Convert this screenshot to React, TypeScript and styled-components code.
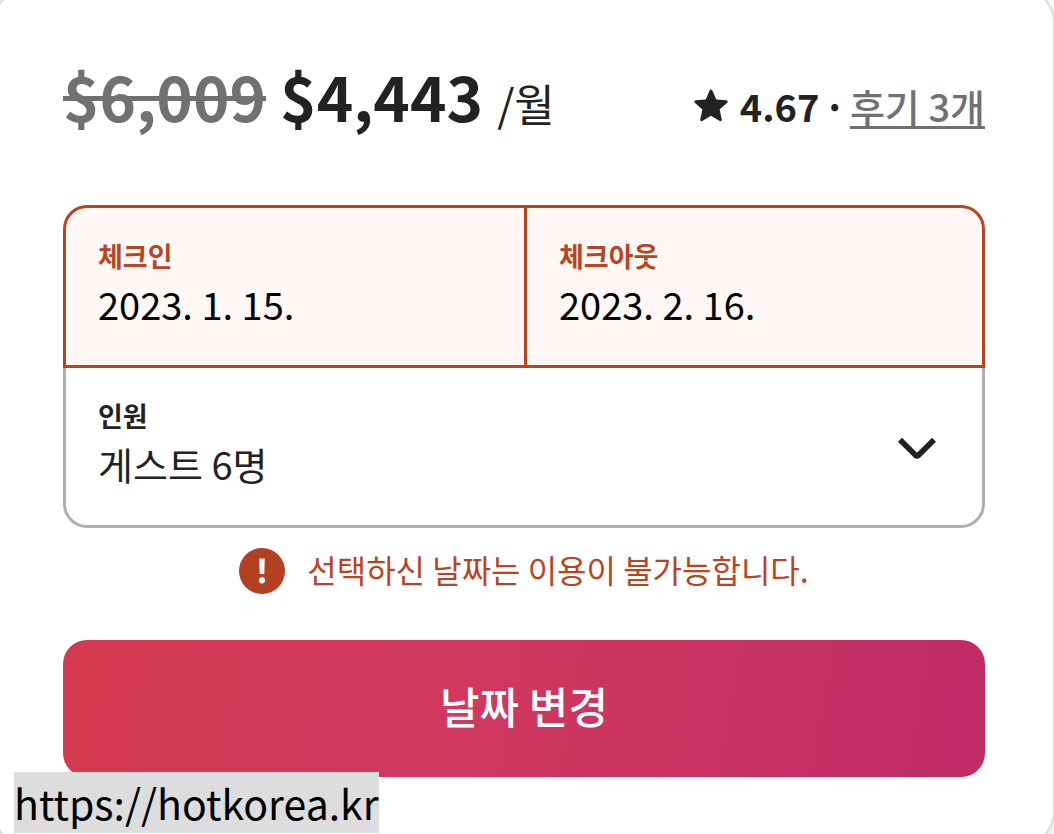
import React, { useState } from "react";
import styled, { createGlobalStyle } from "styled-components";

const sans = '"Noto Sans CJK KR", "Noto Sans", sans-serif';
const ink = "#222222";
const muted = "#717171";
const danger = "#b9441f";
const line = "#b0b0b0";

const GlobalStyle = createGlobalStyle`
  *, *::before, *::after { box-sizing: border-box; }
  body { margin: 0; background: #ffffff; color: ${ink}; font-family: ${sans}; }
  input, select, button { font-family: inherit; }
`;

const Page = styled.main`
  position: relative;
  height: 100vh;
  overflow: hidden;
`;

const Card = styled.section`
  margin: -13px -1px 0 -7px;
  padding: 68px;
  border: 2px solid #dddddd;
  border-radius: 36px;
  background: #ffffff;
  box-shadow: 0 6px 16px rgba(0, 0, 0, 0.12);
`;

const Header = styled.header`
  display: flex;
  align-items: baseline;
  justify-content: space-between;
  height: 88px;
  margin-bottom: 60px;
  white-space: nowrap;
`;

const Price = styled.div`
  display: flex;
  align-items: baseline;
  gap: 14px;
  font-size: 62px;
  line-height: 76px;
`;

const OldPrice = styled.del`
  color: ${muted};
  font-weight: 700;
  text-decoration-thickness: 5px;
`;

const NewPrice = styled.strong`
  font-weight: 700;
`;

const Unit = styled.span`
  font-size: 44px;
`;

const Rating = styled.div`
  display: flex;
  align-items: baseline;
  gap: 4px;
  font-size: 38px;
  line-height: 56px;
`;

const Score = styled.strong`
  padding-left: 8px;
  font-weight: 700;
`;

const Dot = styled.span`
  font-weight: 700;
`;

const Reviews = styled.a`
  color: ${muted};
  font-weight: 500;
  text-decoration: underline;
  text-decoration-thickness: 3px;
  text-underline-offset: 4px;
`;

const Fields = styled.form`
  display: flex;
  flex-direction: column;
`;

const Dates = styled.div`
  display: grid;
  grid-template-columns: 1fr 1fr;
  border: 3px solid ${danger};
  border-radius: 24px 24px 0 0;
  background: #fff8f6;
  overflow: hidden;
`;

const Field = styled.label<{ $divided?: boolean }>`
  display: flex;
  flex-direction: column;
  height: 157px;
  padding: 28px 32px;
  border-left: ${(p) => (p.$divided ? `3px solid ${danger}` : "0")};
`;

const Caption = styled.span<{ $error?: boolean }>`
  font-size: 27px;
  font-weight: 700;
  line-height: 40px;
  color: ${(p) => (p.$error ? danger : ink)};
`;

const DateInput = styled.input`
  width: 100%;
  height: 54px;
  padding: 0;
  border: 0;
  outline: 0;
  background: transparent;
  color: #000000;
  font-size: 38px;
`;

const Guests = styled.div`
  display: grid;
  grid-template-columns: 1fr auto;
  align-items: center;
  padding-right: 46px;
  border: 3px solid ${line};
  border-top: 0;
  border-radius: 0 0 24px 24px;
`;

const GuestSelect = styled.select`
  appearance: none;
  width: 100%;
  height: 54px;
  padding: 0;
  border: 0;
  outline: 0;
  background: transparent;
  color: ${ink};
  font-size: 38px;
`;

const Alert = styled.p`
  display: flex;
  align-items: center;
  justify-content: center;
  gap: 22px;
  height: 46px;
  margin: 20px 0 46px;
  color: ${danger};
  font-size: 32px;
  line-height: 42px;
`;

const AlertText = styled.span`
  padding-bottom: 4px;
`;

const Submit = styled.button`
  display: block;
  width: 100%;
  height: 137px;
  padding: 0 0 8px;
  border: 0;
  border-radius: 24px;
  background: linear-gradient(100deg, #d33a50 4%, #d03860 45%, #c22c66 96%);
  color: #ffffff;
  font-size: 43px;
  font-weight: 500;
`;

const SourceLink = styled.a`
  position: absolute;
  bottom: 1px;
  left: 14px;
  background: #dddddd;
  color: #000000;
  font-size: 41px;
  line-height: 61px;
  text-decoration: none;
`;

const Star = () => (
  <svg width="34" height="33" viewBox="0 0 34 33" aria-hidden="true">
    <path
      fill={ink}
      d="M15.7 1.2c.5-1.1 2-1.1 2.5 0l4.1 9.2 10 .9c1.3.1 1.8 1.6.9 2.5l-7.6 6.6 2.2 10c.3 1.2-1 2.2-2.1 1.5L17 26.7l-8.7 5.2c-1.1.7-2.4-.3-2.1-1.5l2.2-10L.8 13.8c-.9-.9-.4-2.4.9-2.5l10-.9z"
    />
  </svg>
);

const Chevron = () => (
  <svg width="38" height="28" viewBox="0 0 38 28" aria-hidden="true">
    <path
      fill="none"
      stroke={ink}
      strokeWidth="5.6"
      d="M2 6.8 L17.3 22.1 Q19 23.7 20.7 22.1 L36 6.8"
    />
  </svg>
);

const Warning = () => (
  <svg width="46" height="46" viewBox="0 0 46 46" aria-hidden="true">
    <circle cx="23" cy="23" r="23" fill="#b34121" />
    <path fill="#ffffff" d="M20.2 10.5h5.6l-.5 15.5h-4.6z" />
    <circle cx="23" cy="32.3" r="3.1" fill="#ffffff" />
  </svg>
);

export default function App() {
  const [guests, setGuests] = useState("6");
  return (
    <>
      <GlobalStyle />
      <Page>
        <Card>
          <Header>
            <Price>
              <OldPrice>$6,009</OldPrice>
              <NewPrice>$4,443</NewPrice>
              <Unit>/월</Unit>
            </Price>
            <Rating>
              <Star />
              <Score>4.67</Score>
              <Dot>·</Dot>
              <Reviews href="#reviews">후기 3개</Reviews>
            </Rating>
          </Header>
          <Fields onSubmit={(e) => e.preventDefault()}>
            <Dates>
              <Field>
                <Caption $error>체크인</Caption>
                <DateInput readOnly value="2023. 1. 15." />
              </Field>
              <Field $divided>
                <Caption $error>체크아웃</Caption>
                <DateInput readOnly value="2023. 2. 16." />
              </Field>
            </Dates>
            <Guests>
              <Field>
                <Caption>인원</Caption>
                <GuestSelect value={guests} onChange={(e) => setGuests(e.target.value)}>
                  {["1", "2", "3", "4", "5", "6"].map((n) => (
                    <option key={n} value={n}>{`게스트 ${n}명`}</option>
                  ))}
                </GuestSelect>
              </Field>
              <Chevron />
            </Guests>
            <Alert role="alert">
              <Warning />
              <AlertText>선택하신 날짜는 이용이 불가능합니다.</AlertText>
            </Alert>
            <Submit type="submit">날짜 변경</Submit>
          </Fields>
        </Card>
        <SourceLink href="https://hotkorea.kr">https://hotkorea.kr</SourceLink>
      </Page>
    </>
  );
}
